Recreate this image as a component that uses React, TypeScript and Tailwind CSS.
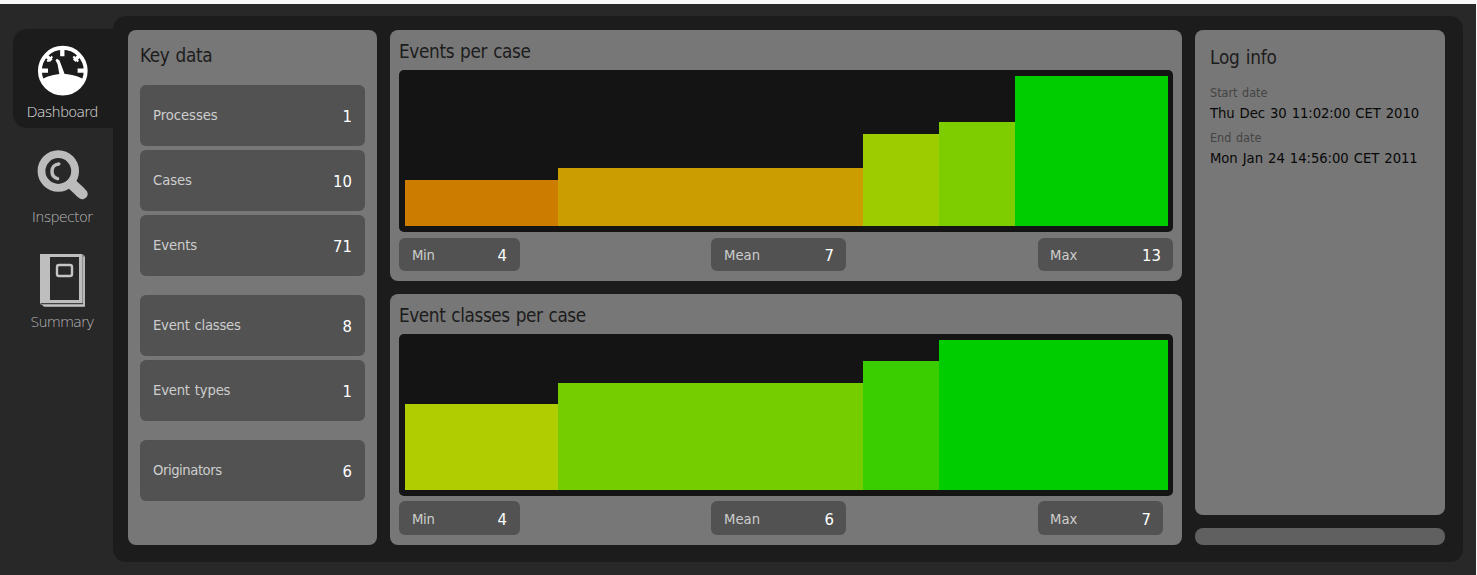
import React from "react";

type Bar = { cases: number; value: number; color: string };
type Stat = { label: string; value: number; width: string; padding: string; tracking: string };

const keyGroups: { label: string; value: number; tracking: string }[][] = [
  [
    { label: "Processes", value: 1, tracking: "tracking-[-0.05px]" },
    { label: "Cases", value: 10, tracking: "tracking-[-0.1px]" },
    { label: "Events", value: 71, tracking: "tracking-[-0.1px]" },
  ],
  [
    { label: "Event classes", value: 8, tracking: "tracking-[-0.25px] [word-spacing:1px]" },
    { label: "Event types", value: 1, tracking: "tracking-[-0.2px] [word-spacing:1px]" },
  ],
  [{ label: "Originators", value: 6, tracking: "tracking-[-0.45px]" }],
];

const eventBars: Bar[] = [
  { cases: 2, value: 4, color: "bg-[#cc7d00]" },
  { cases: 4, value: 5, color: "bg-[#cb9d00]" },
  { cases: 1, value: 8, color: "bg-[#9dcd00]" },
  { cases: 1, value: 9, color: "bg-[#7dcd00]" },
  { cases: 2, value: 13, color: "bg-[#00cd00]" },
];

const classBars: Bar[] = [
  { cases: 2, value: 4, color: "bg-[#afcd00]" },
  { cases: 4, value: 5, color: "bg-[#75cd00]" },
  { cases: 1, value: 6, color: "bg-[#3acd00]" },
  { cases: 3, value: 7, color: "bg-[#00cd00]" },
];

function GaugeIcon() {
  return (
    <svg className="block h-[52px] w-[52px]" viewBox="0 0 52 52" fill="none">
      <circle cx="25.8" cy="25.7" r="22.9" stroke="#fff" strokeWidth="3.9" />
      <path d="M4.5 34.5C9 31.5 17 29 25.8 29C34.5 29 42.5 31.5 47 34.5A23.5 23.5 0 0 1 4.5 34.5Z" fill="#fff" />
      <path d="M18.5 15.2L20 13.8L22.5 15.5L28 30H22.5L20.5 19Z" fill="#fff" />
      <path d="M25.3 3V11.3M3 25.7H11M40.6 25.7H49" stroke="#fff" strokeWidth="4.3" />
      <path d="M8.5 10L14.3 15.7M43 10L37.2 15.7" stroke="#fff" strokeWidth="3.8" />
      <path d="M10.3 16.5L15.3 11.5M41.3 16.5L36.3 11.5" stroke="#fff" strokeWidth="2" />
    </svg>
  );
}

function MagnifierIcon() {
  return (
    <svg className="block h-[52px] w-[52px]" viewBox="0 0 52 52" fill="none">
      <circle cx="21.3" cy="22" r="16.8" stroke="#bcbcbc" strokeWidth="7.8" />
      <path d="M21.8 15C17.2 15.4 15 18.8 15 22.3C15 25.8 17 28.8 20.6 29.6" stroke="#bcbcbc" strokeWidth="3.5" strokeLinecap="round" />
      <path d="M32 32.5L44 43.5" stroke="#bcbcbc" strokeWidth="10.8" />
      <path d="M43.5 43.5L45.5 45" stroke="#bcbcbc" strokeWidth="10.4" strokeLinecap="round" />
    </svg>
  );
}

function BookIcon() {
  return (
    <svg className="block h-[54px] w-[46px]" viewBox="0 0 46 54" fill="none">
      <path d="M0 0H42L45 2V53H5L0 50Z" fill="#909090" />
      <path d="M0 0H42V49H0Z" fill="#bebebe" />
      <path d="M3 51.5H44M44 3V52" stroke="#c4c4c4" strokeWidth="1.5" />
      <path d="M1 49.5H43" stroke="#444" strokeWidth="1" />
      <rect x="10" y="3" width="29" height="43" fill="#282828" />
      <rect x="17" y="11" width="15" height="11" rx="2" stroke="#c4c4c4" strokeWidth="2.4" />
    </svg>
  );
}

function Histogram({ bars, max }: { bars: Bar[]; max: number }) {
  return (
    <div className="flex h-[162px] items-end rounded-[5px] bg-[#141414] pt-[6px] pr-[5px] pb-[6px] pl-[6px]">
      {bars.map((b) => (
        <div key={b.value} className={b.color} style={{ flex: `${b.cases} 1 0`, height: `${(b.value / max) * 150}px` }} />
      ))}
    </div>
  );
}

function StatBox({ label, value, width, padding, tracking, height }: Stat & { height: string }) {
  return (
    <div className={`flex justify-between rounded-[6px] bg-[#525252] ${padding} ${width} ${height}`}>
      <span className={`text-[14.7px] leading-[34px] text-[#cdcdcd] ${tracking}`}>{label}</span>
      <span className="text-[16.5px] leading-[36px] text-white">{value}</span>
    </div>
  );
}

function ChartPanel(props: {
  title: string;
  tracking: string;
  bars: Bar[];
  max: number;
  stats: Stat[];
  statsPadding: string;
  statHeight: string;
}) {
  return (
    <section className="h-[251px] rounded-[8px] bg-[#777] px-[9px]">
      <h2 className={`h-[40px] text-[18.8px] leading-[44px] whitespace-nowrap text-[#1c1c1c] ${props.tracking}`}>{props.title}</h2>
      <Histogram bars={props.bars} max={props.max} />
      <div className={`flex ${props.statsPadding}`}>
        {props.stats.map((s, i) => (
          <React.Fragment key={s.label}>
            {i === 1 && <div className="w-[191px]" />}
            {i === 2 && <div className="w-[192px]" />}
            <StatBox {...s} height={props.statHeight} />
          </React.Fragment>
        ))}
      </div>
    </section>
  );
}

function NavItem(props: { label: string; active?: boolean; tracking: string; children: React.ReactNode }) {
  return (
    <div
      className={`flex h-[99px] w-[100px] flex-col items-center rounded-l-[14px] ${
        props.active ? "bg-[#1c1c1c] text-[#e4e4e4]" : "text-[#bcbcbc]"
      }`}
    >
      <div className="flex h-[71px] items-end">{props.children}</div>
      <span className={`pr-[2px] text-[14.5px] leading-[24px] font-extralight whitespace-nowrap ${props.tracking}`}>{props.label}</span>
    </div>
  );
}

export default function App() {
  return (
    <div className="h-[575px] w-[1477px] overflow-hidden bg-[#f8f8f8] pt-[4px] pr-px font-['DejaVu_Sans_Condensed','DejaVu_Sans',sans-serif] [font-stretch:condensed]">
      <div className="flex h-[571px] bg-[#282828] pt-[12px] pr-[13px] pb-[13px] pl-[13px]">
        <nav className="flex w-[100px] flex-col gap-[6px] pt-[13px] font-['DejaVu_Sans',sans-serif] [font-stretch:normal]">
          <NavItem label="Dashboard" active tracking="tracking-[-0.85px]">
            <div className="mb-[3px]"><GaugeIcon /></div>
          </NavItem>
          <NavItem label="Inspector" tracking="tracking-[-0.8px]">
            <div className="mb-[4px]"><MagnifierIcon /></div>
          </NavItem>
          <NavItem label="Summary" tracking="tracking-[-0.95px]">
            <div className="mb-[2px]"><BookIcon /></div>
          </NavItem>
        </nav>

        <main className="flex h-[546px] w-[1350px] rounded-[13px] bg-[#1c1c1c] pt-[14px] pl-[15px]">
          <section className="h-[515px] w-[249px] rounded-[8px] bg-[#777] px-[12px]">
            <h2 className="h-[55px] text-[18.8px] leading-[52px] tracking-[-0.35px] text-[#1c1c1c] [word-spacing:1px]">Key data</h2>
            <div className="flex flex-col gap-[19px]">
              {keyGroups.map((group) => (
                <div key={group[0].label} className="flex flex-col gap-[4px]">
                  {group.map((k) => (
                    <div key={k.label} className="flex h-[61px] justify-between rounded-[6px] bg-[#525252] px-[13px]">
                      <span className={`text-[14.7px] leading-[60px] text-[#cdcdcd] ${k.tracking}`}>{k.label}</span>
                      <span className="text-[16.5px] leading-[63px] text-white">{k.value}</span>
                    </div>
                  ))}
                </div>
              ))}
            </div>
          </section>

          <div className="ml-[13px] flex w-[792px] flex-col gap-[13px]">
            <ChartPanel
              title="Events per case"
              tracking="tracking-[-0.35px] [word-spacing:1px]"
              bars={eventBars}
              max={13}
              statsPadding="pt-[6px]"
              statHeight="h-[33px]"
              stats={[
                { label: "Min", value: 4, width: "w-[121px]", padding: "px-[13px]", tracking: "tracking-[-0.3px]" },
                { label: "Mean", value: 7, width: "w-[135px]", padding: "pr-[12px] pl-[13px]", tracking: "tracking-normal" },
                { label: "Max", value: 13, width: "w-[135px]", padding: "px-[12px]", tracking: "tracking-normal" },
              ]}
            />
            <ChartPanel
              title="Event classes per case"
              tracking="tracking-[-0.4px] [word-spacing:1px]"
              bars={classBars}
              max={7}
              statsPadding="pt-[5px]"
              statHeight="h-[34px] pt-px"
              stats={[
                { label: "Min", value: 4, width: "w-[121px]", padding: "px-[13px]", tracking: "tracking-[-0.3px]" },
                { label: "Mean", value: 6, width: "w-[135px]", padding: "pr-[12px] pl-[13px]", tracking: "tracking-normal" },
                { label: "Max", value: 7, width: "w-[125px]", padding: "px-[12px]", tracking: "tracking-normal" },
              ]}
            />
          </div>

          <aside className="ml-[13px] flex w-[250px] flex-col gap-[13px]">
            <section className="h-[485px] rounded-[8px] bg-[#777] pl-[15px] whitespace-nowrap">
              <h2 className="h-[52px] text-[18.8px] leading-[56px] tracking-[-0.2px] text-[#1c1c1c] [word-spacing:1px]">Log info</h2>
              <dl>
                <dt className="h-[20px] text-[12.5px] leading-[21px] text-[#444] [word-spacing:1px]">Start date</dt>
                <dd className="h-[25px] text-[14.7px] leading-[22px] tracking-[-0.1px] text-[#080808] [word-spacing:1px]">Thu Dec 30 11:02:00 CET 2010</dd>
                <dt className="h-[20px] text-[12.5px] leading-[21px] text-[#444] [word-spacing:1px]">End date</dt>
                <dd className="h-[25px] text-[14.7px] leading-[22px] tracking-[-0.07px] text-[#080808] [word-spacing:1px]">Mon Jan 24 14:56:00 CET 2011</dd>
              </dl>
            </section>
            <div className="h-[17px] rounded-[8px] bg-[#606060]" />
          </aside>
        </main>
      </div>
    </div>
  );
}
